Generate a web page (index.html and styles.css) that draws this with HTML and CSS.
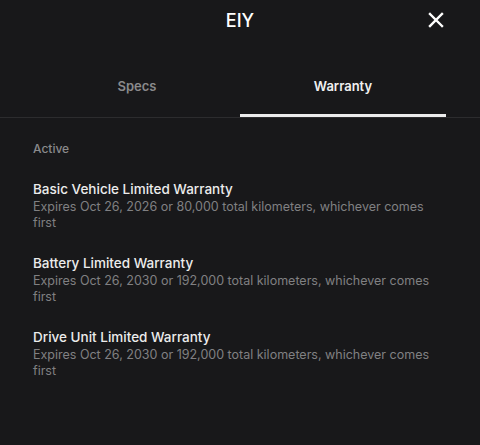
FILE: index.html
```html
<!DOCTYPE html>
<html>
<head>
<meta charset="utf-8">
<link rel="stylesheet" href="styles.css">
</head>
<body>
<div class="screen">
  <header class="topbar">
    <div class="title">EIY</div>
    <button class="close" aria-label="Close">
      <svg width="16" height="16" viewBox="0 0 16 16"><path d="M2 2 L14 14 M14 2 L2 14" stroke="#fff" stroke-width="2.4" stroke-linecap="square"/></svg>
    </button>
  </header>
  <nav class="tabs">
    <div class="tab">Specs</div>
    <div class="tab active">Warranty</div>
  </nav>
  <main class="content">
    <div class="section-label">Active</div>
    <div class="item">
      <div class="item-title">Basic Vehicle Limited Warranty</div>
      <div class="item-sub">Expires Oct 26, 2026 or 80,000 total kilometers, whichever comes first</div>
    </div>
    <div class="item">
      <div class="item-title">Battery Limited Warranty</div>
      <div class="item-sub">Expires Oct 26, 2030 or 192,000 total kilometers, whichever comes first</div>
    </div>
    <div class="item">
      <div class="item-title">Drive Unit Limited Warranty</div>
      <div class="item-sub">Expires Oct 26, 2030 or 192,000 total kilometers, whichever comes first</div>
    </div>
  </main>
</div>
</body>
</html>
```
FILE: styles.css
```css
html, body {
  margin: 0;
  padding: 0;
  background: #18181a;
}
.screen {
  width: 480px;
  height: 445px;
  background: #18181a;
  font-family: Inter, "Noto Sans", sans-serif;
  color: #ececec;
  overflow: hidden;
}
.topbar {
  position: relative;
  height: 40px;
  display: flex;
  align-items: center;
  justify-content: center;
}
.title {
  font-size: 18px;
  font-weight: 500;
  color: #fff;
}
.close {
  position: absolute;
  right: 35px;
  top: 11px;
  width: 18px;
  height: 18px;
  padding: 0;
  border: 0;
  background: none;
  display: flex;
  align-items: center;
  justify-content: center;
}
.tabs {
  display: flex;
  padding: 0 34px;
  margin-top: 25px;
  border-bottom: 1px solid #2c2c2e;
}
.tab {
  flex: 1;
  text-align: center;
  font-size: 13px;
  font-weight: 600;
  color: #8a8a8c;
  height: 52px;
  line-height: 42px;
  box-sizing: border-box;
}
.tab.active {
  color: #f0f0f0;
  border-bottom: 3px solid #ececec;
}
.content {
  padding: 23px 33px 0;
}
.section-label {
  font-size: 12px;
  font-weight: 500;
  color: #8a8a8c;
  line-height: 16px;
  margin-bottom: 23px;
}
.item {
  margin-bottom: 23px;
}
.item-title {
  font-size: 13.5px;
  font-weight: 500;
  color: #ececec;
  line-height: 19px;
}
.item-sub {
  font-size: 12.5px;
  color: #808082;
  line-height: 16px;
}
```
